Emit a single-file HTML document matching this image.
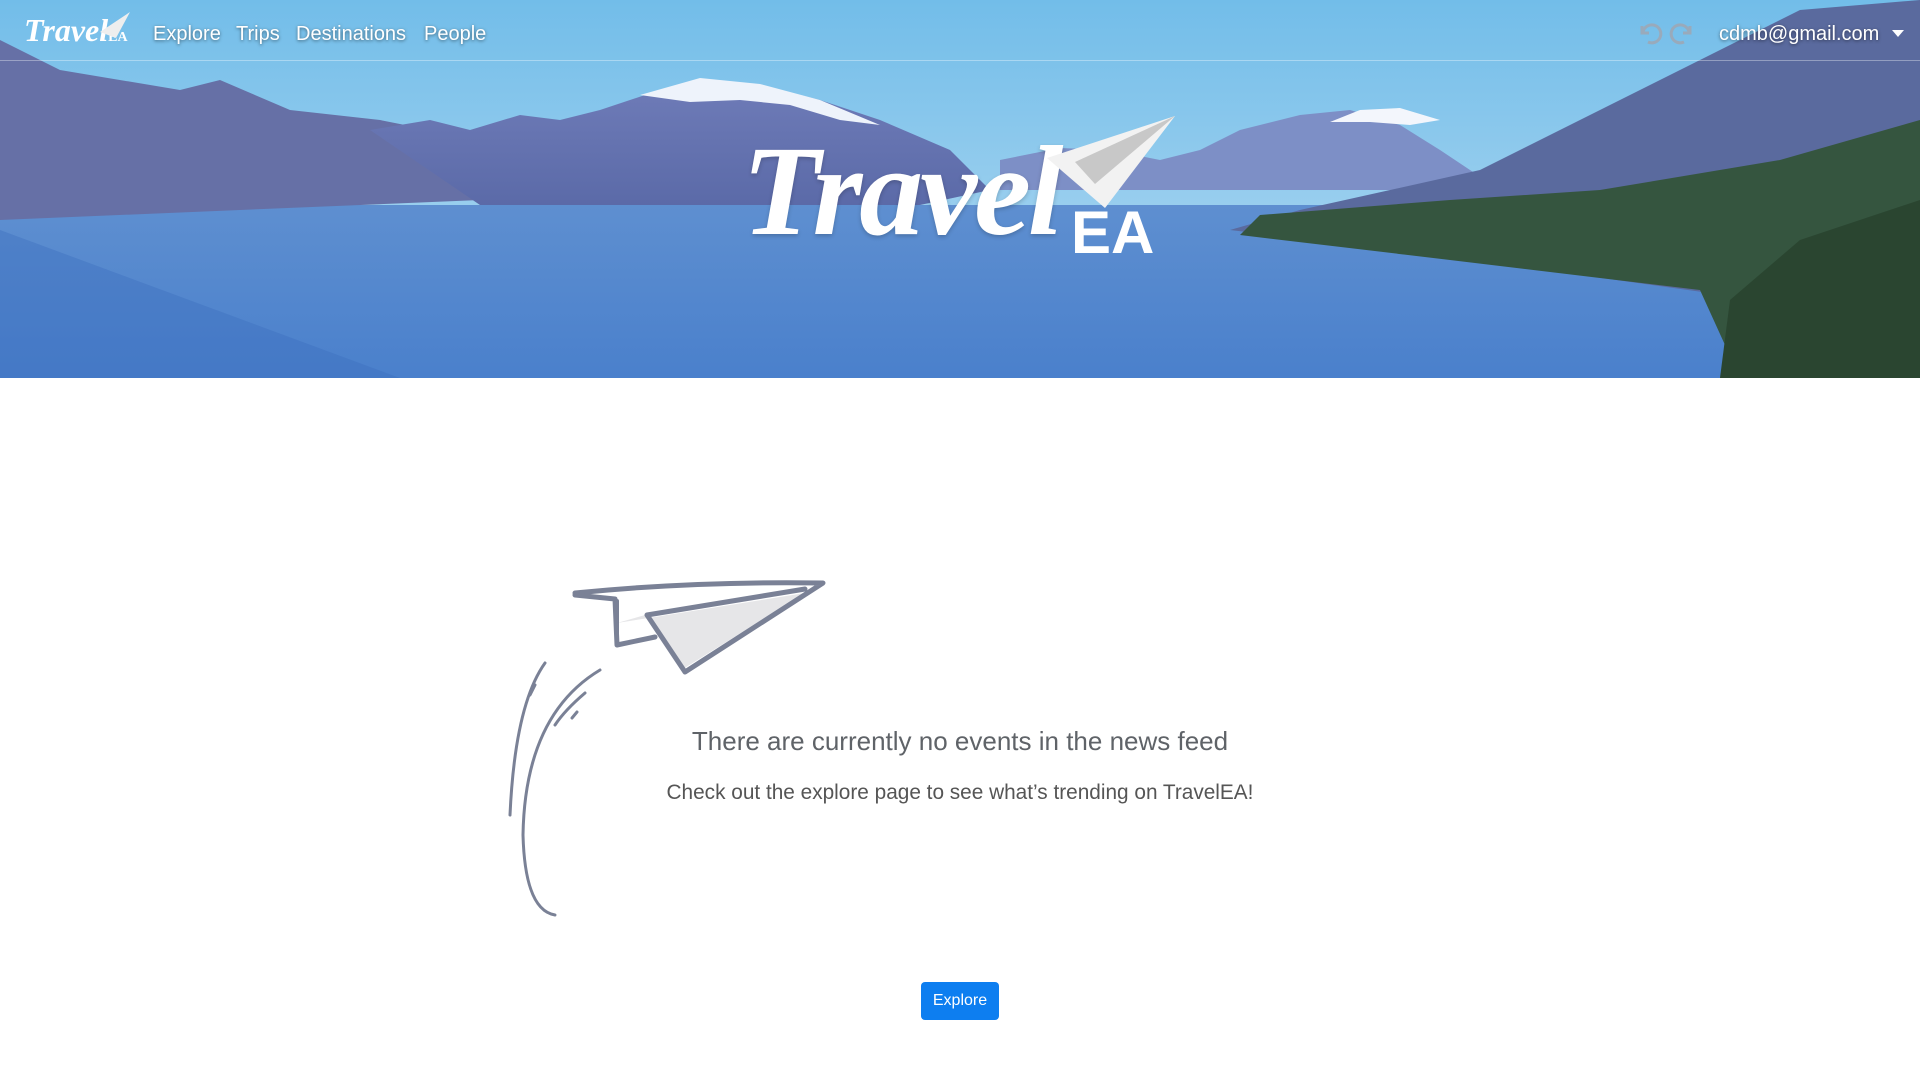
<!DOCTYPE html>
<html><head><meta charset="utf-8"><style>
*{margin:0;padding:0;box-sizing:border-box}
body{width:1920px;height:1080px;background:#fff;font-family:"Liberation Sans",sans-serif;overflow:hidden;position:relative}
.hero{position:absolute;left:0;top:0;width:1920px;height:378px;overflow:hidden}
.nav{position:absolute;left:0;top:0;width:1920px;height:61px;border-bottom:1px solid rgba(255,255,255,.35)}
.nav a{position:absolute;top:23px;color:#fff;font-size:20px;text-shadow:0 1px 3px rgba(0,0,0,.5);text-decoration:none}
h3{position:absolute;top:726px;left:0;width:1920px;text-align:center;font-weight:normal;color:#5f6368;font-size:26px}
p.sub{position:absolute;top:781px;left:0;width:1920px;text-align:center;color:#555;font-size:20.8px}
.btn{position:absolute;left:921px;top:982px;width:78px;height:38px;background:#0d7ef0;border-radius:4px;color:#fff;font-size:16px;text-align:center;line-height:38px}
</style></head><body>
<div class="hero">
<svg width="1920" height="378" viewBox="0 0 1920 378">
<defs>
<linearGradient id="sky" x1="0" y1="0" x2="0" y2="1"><stop offset="0" stop-color="#72bde9"/><stop offset="1" stop-color="#b8dcf2"/></linearGradient>
<linearGradient id="lake" x1="0" y1="0" x2="0" y2="1"><stop offset="0" stop-color="#5e8fd0"/><stop offset="1" stop-color="#4a80cc"/></linearGradient>
<linearGradient id="mt" x1="0" y1="0" x2="0" y2="1"><stop offset="0" stop-color="#6f7cb8"/><stop offset="1" stop-color="#5b6aa8"/></linearGradient>
</defs>
<rect width="1920" height="378" fill="url(#sky)"/>
<rect y="205" width="1920" height="173" fill="url(#lake)"/>
<path d="M0 40 L60 70 L180 90 L220 80 L290 110 L380 120 L430 130 L480 200 L0 220Z" fill="#6670a6"/>
<path d="M370 130 L430 120 L470 130 L520 115 L560 120 L600 110 L660 90 L700 80 L760 85 L820 100 L880 120 L950 150 L990 190 L920 205 L480 205Z" fill="url(#mt)"/>
<path d="M640 95 L700 78 L760 84 L820 100 L880 125 L840 120 L790 105 L740 100 L690 102Z" fill="#eef3fb"/>
<path d="M1000 160 L1060 148 L1110 150 L1160 160 L1200 150 L1240 130 L1300 115 L1350 110 L1400 125 L1440 150 L1500 190 L1000 190Z" fill="#7d8fc6"/>
<path d="M1330 122 L1360 110 L1400 108 L1440 120 L1410 125 L1370 122Z" fill="#f3f6fc"/>
<path d="M1920 0 L1800 10 L1700 60 L1600 110 L1480 170 L1300 210 L1230 230 L1400 250 L1580 275 L1760 300 L1720 378 L1920 378Z" fill="#5a6a9e"/>
<path d="M1920 120 L1780 160 L1600 190 L1450 200 L1260 215 L1240 235 L1450 260 L1700 290 L1740 378 L1920 378Z" fill="#35553f"/>
<path d="M1920 200 L1800 240 L1730 300 L1720 378 L1920 378Z" fill="#2a4530"/>
<path d="M0 230 L0 378 L400 378 Z" fill="#3d6fbf" opacity=".4"/>
</svg>
<div class="nav">
<div style="position:absolute;left:24px;top:12px;font-family:'Liberation Serif',serif;font-style:italic;font-weight:bold;color:#fff;font-size:32px">Travel<span style="font-size:14px;font-style:normal">EA</span></div>
<svg style="position:absolute;left:100px;top:12px" width="32" height="26"><path d="M0 20 L30 0 L16 26Z" fill="#eee"/></svg>
<a style="left:153px">Explore</a><a style="left:236px">Trips</a><a style="left:296px">Destinations</a><a style="left:424px">People</a>
<svg style="position:absolute;left:1636px;top:20px" width="60" height="26" fill="none" stroke="#9ab" stroke-width="3"><path d="M6 6 V13 H13 M7 12 A9 9 0 1 1 12 22"/><path d="M54 6 V13 H47 M53 12 A9 9 0 1 0 48 22"/></svg>
<a style="left:1719px">cdmb@gmail.com</a>
<div style="position:absolute;left:1892px;top:30px;border-left:6px solid transparent;border-right:6px solid transparent;border-top:7px solid #fff"></div>
</div>
<div style="position:absolute;left:742px;top:118px;font-family:'Liberation Serif',serif;font-style:italic;font-weight:bold;color:#fff;font-size:128px;letter-spacing:-3px;text-shadow:0 2px 4px rgba(0,0,0,.2)">Travel</div>
<div style="position:absolute;left:1071px;top:198px;font-weight:bold;color:#fff;font-size:60px">EA</div>
<svg style="position:absolute;left:1045px;top:114px" width="132" height="96"><path d="M2 44 L130 2 L60 94 Z" fill="#f2f2f2"/><path d="M30 48 L130 2 L50 70Z" fill="#c8c8c8"/></svg>
</div>
<svg style="position:absolute;left:505px;top:575px" width="325" height="350" fill="none" stroke="#7a8196" stroke-linecap="round" stroke-linejoin="round">
<path d="M70 24 L145 40 L175 97 L318 10 Z" fill="#fff" stroke="none"/>
<path d="M112 48 L140 40 L178 94 L300 18 Z" fill="#e6e6e8" stroke="none"/>
<path d="M70 18 Q190 6 318 8 L180 97 L142 40 L300 14" stroke-width="5"/>
<path d="M70 20 L110 24 L112 70 L150 62" stroke-width="5"/>
<path d="M112 26 L112 70" stroke-width="4"/>
<path d="M40 88 Q10 130 5 240" stroke-width="3"/>
<path d="M95 95 Q20 140 18 260 Q20 335 50 340" stroke-width="3"/>
<path d="M80 118 Q60 135 50 150" stroke-width="3"/>
<path d="M30 110 L25 120" stroke-width="3"/>
<path d="M72 137 L67 143" stroke-width="3"/>
</svg>
<h3>There are currently no events in the news feed</h3>
<p class="sub">Check out the explore page to see what’s trending on TravelEA!</p>
<div class="btn">Explore</div>
</body></html>
